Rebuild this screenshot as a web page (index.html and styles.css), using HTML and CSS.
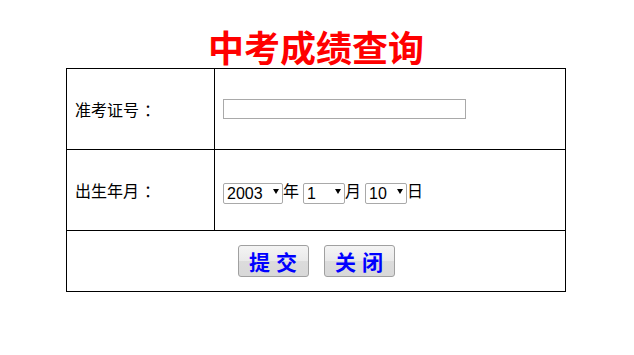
FILE: index.html
```html
<!DOCTYPE html>
<html lang="zh-CN">
<head>
<meta charset="utf-8">
<title>中考成绩查询</title>
<link rel="stylesheet" href="styles.css">
</head>
<body>
<h1 class="title">中考成绩查询</h1>
<form class="query">
  <div class="cell label">准考证号<span class="colon">：</span></div>
  <div class="cell field"><input class="text-input" type="text"></div>
  <div class="cell label">出生年月<span class="colon">：</span></div>
  <div class="cell field">
    <span class="sel sel-year"><select><option>2003</option></select></span><span class="unit">年</span>
    <span class="sel sel-small"><select><option>1</option></select></span><span class="unit">月</span>
    <span class="sel sel-small"><select><option>10</option></select></span><span class="unit">日</span>
  </div>
  <div class="cell actions">
    <button type="button" class="btn">提 交</button>
    <button type="button" class="btn">关 闭</button>
  </div>
</form>
</body>
</html>
```
FILE: styles.css
```css
html, body {
  background: #fff;
}
body {
  margin: 8px 10px 8px 8px;
  font-family: "Noto Sans CJK SC", "Liberation Sans", sans-serif;
  font-size: 16px;
  color: #000;
}
.title {
  margin: 16px 0 0 0;
  font-size: 36px;
  line-height: 44px;
  font-weight: bold;
  color: #ff0000;
  text-align: center;
}
.query {
  width: 500px;
  box-sizing: border-box;
  margin: 0 auto;
  border: 1px solid #000;
  display: grid;
  grid-template-columns: 148px 350px;
  grid-template-rows: 81px 81px 60px;
}
.cell {
  display: flex;
  align-items: center;
  box-sizing: border-box;
}
.label {
  border-right: 1px solid #000;
  border-bottom: 1px solid #000;
  padding-left: 8px;
}
.colon {
  padding-left: 5px;
}
.field {
  border-bottom: 1px solid #000;
  padding-left: 8px;
}
.actions {
  grid-column: 1 / 3;
  justify-content: center;
  gap: 15px;
  padding-left: 0;
}
.text-input {
  box-sizing: border-box;
  width: 243px;
  height: 20px;
  border: 1px solid #a9a9a9;
  padding: 0 2px;
  margin: 0;
  font: 14px "Liberation Sans", sans-serif;
  outline: none;
}
.sel {
  position: relative;
  display: inline-block;
  height: 21px;
}
.sel select {
  appearance: none;
  -webkit-appearance: none;
  box-sizing: border-box;
  height: 21px;
  margin: 0;
  border: 1px solid #a9a9a9;
  border-radius: 2px;
  background: #fff;
  color: #000;
  font: 16px/19px "Liberation Sans", sans-serif;
  padding: 0 0 0 3px;
}
.sel-year select { width: 60px; }
.sel-small select { width: 42px; }
.sel::after {
  content: "";
  position: absolute;
  right: 4px;
  top: 9px;
  border-left: 3px solid transparent;
  border-right: 3px solid transparent;
  border-top: 5px solid #000;
  pointer-events: none;
}
.unit {
  font-size: 16px;
  margin-right: 4px;
}
.btn {
  box-sizing: border-box;
  width: 71px;
  height: 32px;
  margin: 0;
  padding: 0;
  border: 1px solid #a0a0a0;
  border-radius: 3px;
  background: linear-gradient(#f4f4f4, #e9e9e9 50%, #dcdcdc 51%, #d8d8d8);
  color: #0000ff;
  font-family: "Noto Sans CJK SC", sans-serif;
  font-size: 21px;
  font-weight: bold;
  line-height: 28px;
  word-spacing: 1px;
}
```
